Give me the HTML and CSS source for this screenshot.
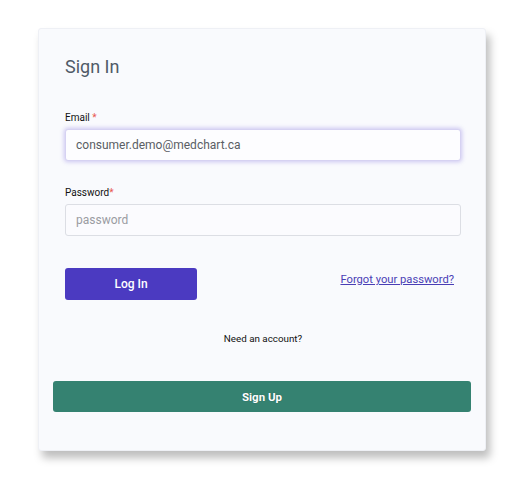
FILE: index.html
```html
<!DOCTYPE html>
<html>
<head>
<meta charset="utf-8">
<link rel="stylesheet" href="styles.css">
</head>
<body>
<div class="card">
  <div class="form">
    <h1 class="title">Sign In</h1>
    <label class="label">Email <span class="req">*</span></label>
    <div class="input focused">consumer.demo@medchart.ca</div>
    <label class="label label-pw">Password<span class="req">*</span></label>
    <div class="input placeholder">password</div>
    <div class="actions">
      <button class="btn-login">Log In</button>
      <a class="forgot" href="#">Forgot your password?</a>
    </div>
    <p class="need">Need an account?</p>
  </div>
  <div class="signup-wrap">
    <button class="btn-signup">Sign Up</button>
  </div>
</div>
</body>
</html>
```

FILE: styles.css
```css
html, body {
  margin: 0;
  padding: 0;
  background: #ffffff;
  font-family: Roboto, "Liberation Sans", Arial, sans-serif;
}
body {
  padding: 28px 0 26px 38px;
}
.card {
  width: 448px;
  height: 423px;
  box-sizing: border-box;
  background: #f9fafd;
  border: 1px solid #eef0f5;
  border-radius: 3px;
  box-shadow: 4px 7px 9px rgba(0, 0, 0, 0.26);
}
.form {
  padding: 26px 24px 0 26px;
  display: flex;
  flex-direction: column;
}
.title {
  margin: 0 0 33px 0;
  font-size: 18px;
  line-height: 24px;
  font-weight: 400;
  color: #505a67;
}
.label {
  display: block;
  font-size: 10px;
  line-height: 12px;
  color: #111;
  margin-bottom: 5px;
}
.label-pw {
  margin-top: 26px;
}
.req {
  color: #e8584f;
}
.input {
  height: 32px;
  box-sizing: border-box;
  border: 1px solid #dcdee4;
  border-radius: 3px;
  background: #fbfbfe;
  padding: 0 10px;
  font-size: 12px;
  line-height: 30px;
  color: #5a5e64;
}
.input.focused {
  border-color: #d6d2f2;
  box-shadow: 0 0 4px 1px rgba(120, 100, 220, 0.35);
  background: #fdfdff;
}
.input.placeholder {
  color: #9a9ca2;
}
.actions {
  margin-top: 32px;
  display: flex;
  justify-content: space-between;
  align-items: flex-start;
}
.btn-login {
  width: 132px;
  height: 32px;
  border: none;
  border-radius: 3px;
  background: #4b3ac1;
  color: #ffffff;
  font-family: Roboto, "Liberation Sans", Arial, sans-serif;
  font-size: 12px;
  font-weight: 500;
  padding: 0;
}
.forgot {
  margin-top: 5px;
  margin-right: 7px;
  font-size: 11.2px;
  line-height: 13px;
  color: #4a3eb5;
  text-decoration: underline;
}
.need {
  margin: 33px 0 0 0;
  text-align: center;
  font-size: 9.8px;
  line-height: 12px;
  color: #111;
}
.signup-wrap {
  padding: 36px 14px 0 14px;
}
.btn-signup {
  display: block;
  width: 100%;
  height: 31px;
  border: none;
  border-radius: 3px;
  background: #358271;
  color: #ffffff;
  font-family: Roboto, "Liberation Sans", Arial, sans-serif;
  font-size: 11.5px;
  font-weight: 700;
  text-shadow: 0 0 1px rgba(0, 0, 0, 0.35);
  padding: 0;
}
```
